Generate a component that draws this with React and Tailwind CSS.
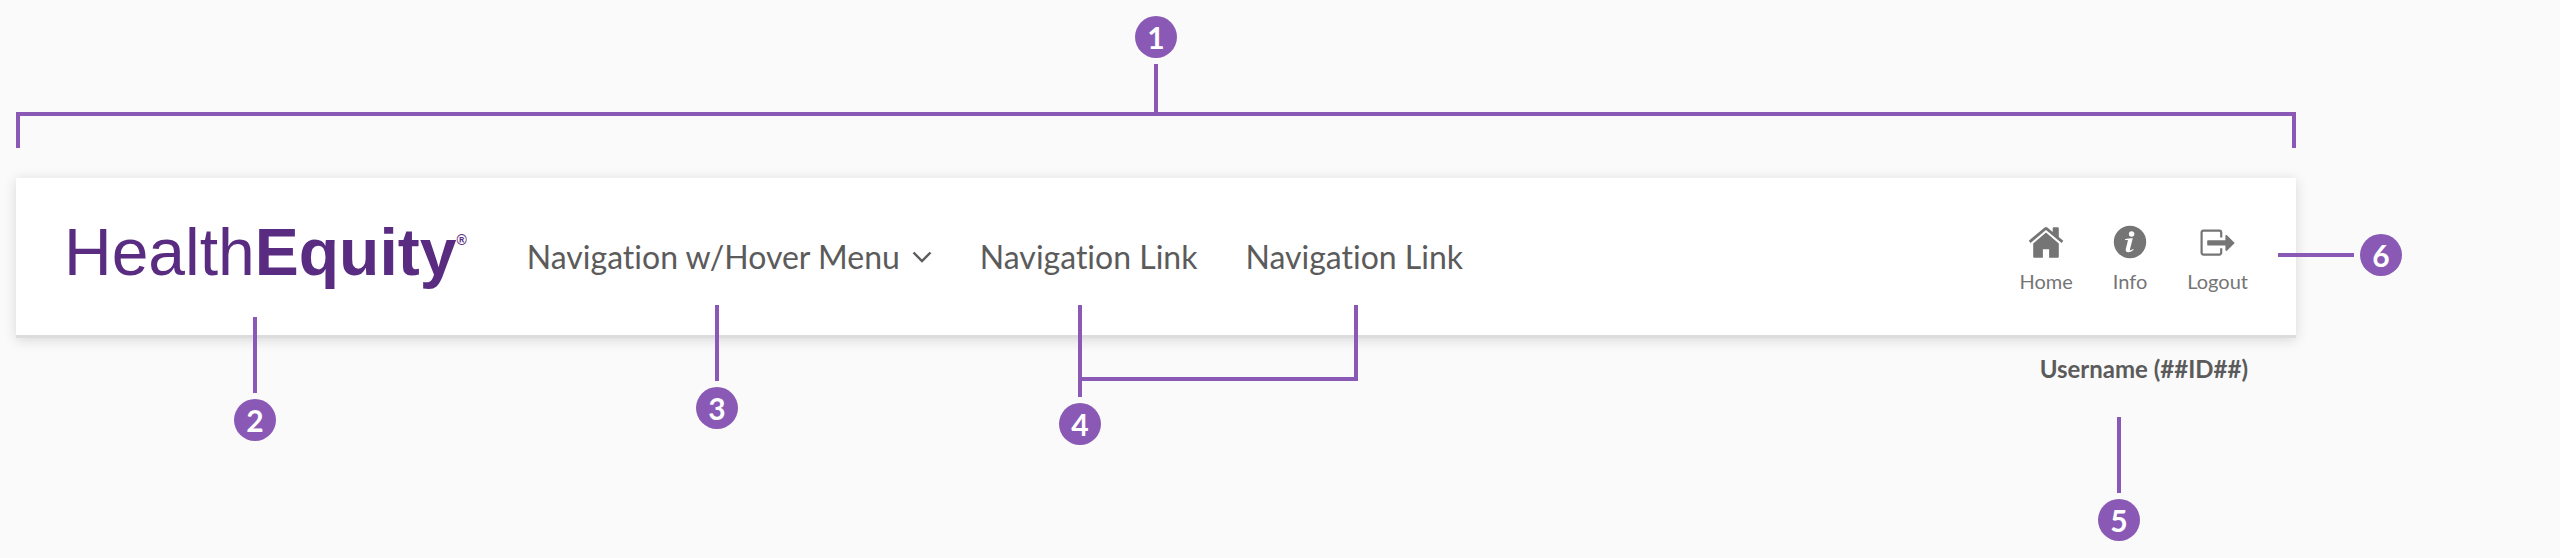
import React from "react";

function Badge({ children }) {
  return (
    <span className="flex size-[42px] shrink-0 items-center justify-center rounded-full bg-[#8959b5] text-[30px] leading-none font-bold text-white">
      {children}
    </span>
  );
}

function Callout({ children }) {
  return (
    <span className="flex flex-col items-center gap-[6px]">
      <span className="h-[76px] w-1 bg-[#8959b5]" />
      <Badge>{children}</Badge>
    </span>
  );
}

function HomeIcon() {
  return (
    <svg viewBox="0 0 36 34" className="h-[34px] w-9" fill="currentColor" aria-hidden="true">
      <path d="M5.2 18.4 18 7.6l12.8 10.800v13.300a1 1 0 0 1-1 1h-8.700v-8.400h-6.200v8.400H6.200a1 1 0 0 1-1-1z" />
      <path d="M.8 15.700 16.300 2.700a2.700 2.700 0 0 1 3.400 0l5 4.200V3.200c0-.5.4-.9.900-.9h4.300c.5 0 .9.400.9.900v8.900l4.500 3.600-1.700 2.200L18 5.100 2.500 17.900z" />
    </svg>
  );
}

function InfoIcon() {
  return (
    <svg viewBox="0 0 34 34" className="size-[34px]" aria-hidden="true">
      <circle cx="17" cy="17" r="16.200" fill="currentColor" />
      <circle cx="18.600" cy="9" r="2.700" fill="#fff" />
      <path
        d="M12 14.200c2.600-.7 5-.9 7.800-1l-2.900 11.200c-.2.900.1 1.100.8.8l2.500-1.300.5.800c-2 1.700-3.600 2.500-5.400 2.500-2.200 0-3-1.200-2.500-3.200l2-7.900c.2-.8 0-1-.6-1.100l-2.200-.1z"
        fill="#fff"
      />
    </svg>
  );
}

function LogoutIcon() {
  return (
    <svg viewBox="0 0 36 34" className="h-[34px] w-9" aria-hidden="true">
      <path
        d="M21.200 12.500V7.400a1.800 1.800 0 0 0-1.800-1.800H3.400A1.800 1.800 0 0 0 1.600 7.400v20.400a1.800 1.800 0 0 0 1.800 1.800h16a1.800 1.800 0 0 0 1.800-1.800v-4.600"
        fill="none"
        stroke="currentColor"
        strokeWidth="2.200"
      />
      <path
        d="M8.200 15.200h17.200v-4c0-1.200 1-1.500 1.800-.7l7.500 7.400-7.500 7.600c-.8.800-1.800.4-1.800-.7v-4.200H8.200c-.6 0-1-.4-1-1v-3.400c0-.6.4-1 1-1z"
        fill="currentColor"
      />
    </svg>
  );
}

const actions = [
  { label: "Home", Icon: HomeIcon },
  { label: "Info", Icon: InfoIcon },
  { label: "Logout", Icon: LogoutIcon },
];

export default function App() {
  return (
    <main className="min-h-screen bg-[#fafafa] pt-4 pr-[264px] pl-4 font-['Lato',sans-serif] text-[#5b5b5b] [font-variant-ligatures:none]">
      <div className="flex flex-col items-center">
        <Badge>1</Badge>
        <span className="mt-[6px] h-12 w-1 bg-[#8959b5]" />
        <span className="h-9 w-full border-x-4 border-t-4 border-[#8959b5]" />
      </div>

      <header className="relative mt-[30px] flex h-40 items-center justify-between border-b-[3px] border-[#dcdcdc] bg-white px-12 shadow-[0_2px_12px_rgba(0,0,0,0.14)]">
        <div className="flex items-center gap-[60px]">
          <a href="#" className="flex items-start pb-[10px] font-['Liberation_Sans',Arial,sans-serif] text-[66px] leading-[78px] text-[#592c82]">
            <span>Health</span>
            <span className="font-bold">Equity</span>
            <span className="mt-5 text-[14px] leading-[14px] font-bold">®</span>
          </a>
          <nav className="flex items-center gap-12 text-[32px] leading-10">
            <button type="button" className="flex items-center gap-3">
              Navigation w/Hover Menu
              <svg viewBox="0 0 20 12" className="h-3 w-5" fill="none" stroke="currentColor" strokeWidth="2.400" aria-hidden="true">
                <path d="M1.500 1.500 10 10l8.500-8.500" />
              </svg>
            </button>
            <a href="#">Navigation Link</a>
            <a href="#">Navigation Link</a>
          </nav>
        </div>

        <div className="flex gap-10 pt-1 text-[20px] leading-6 text-[#757575]">
          {actions.map(({ label, Icon }) => (
            <a key={label} href="#" className="flex flex-col items-center gap-[10px]">
              <Icon />
              {label}
            </a>
          ))}
        </div>

        <div className="absolute top-[139px] left-[218px]">
          <Callout>2</Callout>
        </div>
        <div className="absolute top-[127px] left-[680px]">
          <Callout>3</Callout>
        </div>
        <div className="absolute top-[127px] left-[1062px] h-[76px] w-[280px] border-x-4 border-b-4 border-[#8959b5]" />
        <div className="absolute top-[143px] left-[1043px]">
          <Callout>4</Callout>
        </div>
        <div className="absolute top-[56px] -right-[106px] flex items-center gap-[6px]">
          <span className="h-1 w-[76px] bg-[#8959b5]" />
          <Badge>6</Badge>
        </div>
      </header>

      <div className="flex flex-col items-end">
        <p className="mt-[15px] mr-12 text-[24px] leading-8 font-bold">Username (##ID##)</p>
        <div className="mt-8 mr-[156px]">
          <Callout>5</Callout>
        </div>
      </div>
    </main>
  );
}
